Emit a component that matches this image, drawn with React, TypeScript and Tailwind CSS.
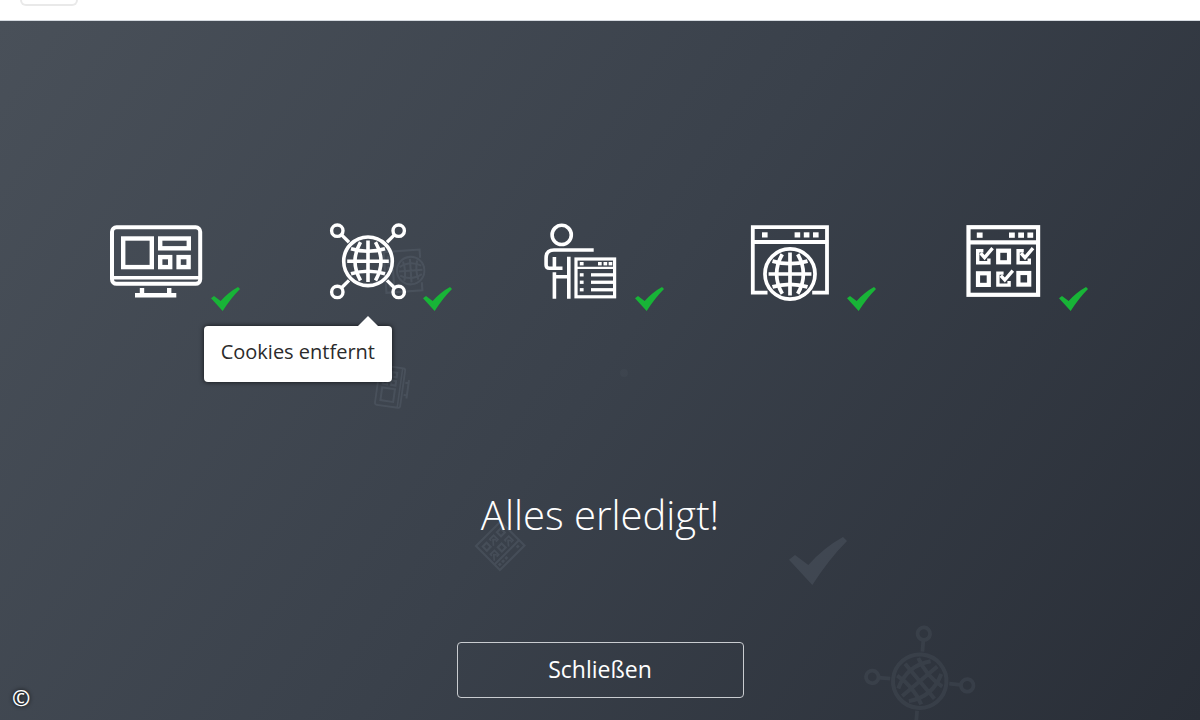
import type { ReactNode } from 'react';

interface Step {
  id: string;
  icon: ReactNode;
  tooltip?: string;
}

function GlobeShape() {
  return (
    <g fill="none" stroke="currentColor" strokeWidth="3.6">
      <circle r="24.3" />
      <path d="M0-20.8V20.8M-20.8 0H20.8" />
      <path d="M-7.5-19.2Q-18.5 0-7.5 19.2M7.5-19.2Q18.5 0 7.5 19.2" />
      <path d="M-17-12.5Q0-7.5 17-12.5M-17 12.5Q0 7.5 17 12.5" />
    </g>
  );
}

function MonitorIcon({ className }: { className: string }) {
  return (
    <svg className={className} viewBox="0 0 100 80" fill="none" stroke="currentColor" strokeWidth="4" aria-hidden="true">
      <rect x="6" y="6.3" width="88.2" height="56.5" rx="4.5" />
      <path d="M6 56.7H94" strokeWidth="3.4" />
      <rect x="17.2" y="17.5" width="28.6" height="28.6" strokeWidth="4.4" />
      <rect x="54.2" y="17.5" width="28.6" height="9.8" strokeWidth="4.4" />
      <rect x="54.2" y="36.1" width="10" height="10" strokeWidth="4.4" />
      <rect x="72.6" y="36.1" width="10" height="10" strokeWidth="4.4" />
      <path d="M29 74.2H70.3M36 67V74M63.2 67V74" strokeWidth="4.4" />
    </svg>
  );
}

function NetworkIcon({ className }: { className: string }) {
  return (
    <svg className={className} viewBox="0 0 100 80" fill="none" stroke="currentColor" strokeWidth="3.4" aria-hidden="true">
      <g transform="translate(50 40.3)">
        <GlobeShape />
      </g>
      <circle cx="19.3" cy="9.7" r="5.7" />
      <circle cx="80.7" cy="9.7" r="5.7" />
      <circle cx="19.3" cy="70.9" r="5.7" />
      <circle cx="80.7" cy="70.9" r="5.7" />
      <path d="M23.6 13.9L31 21.2M76.4 13.9L69 21.2M23.6 66.7L31 59.4M76.4 66.7L69 59.4" />
    </svg>
  );
}

function PersonIcon({ className }: { className: string }) {
  return (
    <svg className={className} viewBox="0 0 100 80" fill="none" stroke="currentColor" strokeWidth="3.6" aria-hidden="true">
      <circle cx="31.7" cy="13.9" r="9.6" />
      <path d="M63.7 29H24Q16.1 29 16.1 37V44Q16.1 47.3 19.5 47.3H32.5" />
      <path d="M24.4 36V47.3M24.4 51.2V77.8M38.8 35.8V77.8M24.4 55.7H38.8" />
      <rect x="46" y="38" width="38.6" height="37.8" strokeWidth="3.2" />
      <path d="M46 46.9H84.6" strokeWidth="2.4" />
      <g fill="currentColor" stroke="none">
        <rect x="49.8" y="41" width="3.8" height="3.4" />
        <rect x="68" y="41" width="3.7" height="3.4" />
        <rect x="73.5" y="41" width="3.7" height="3.4" />
        <rect x="78.6" y="41" width="3.7" height="3.4" />
        <rect x="49.8" y="52.2" width="3.8" height="3.3" />
        <rect x="49.8" y="59.6" width="3.8" height="3.3" />
        <rect x="49.8" y="67.1" width="3.8" height="3.3" />
        <rect x="61" y="52.2" width="22" height="3.3" />
        <rect x="61" y="59.6" width="22" height="3.3" />
        <rect x="61" y="67.1" width="22" height="3.3" />
      </g>
    </svg>
  );
}

function BrowserIcon({ className }: { className: string }) {
  return (
    <svg className={className} viewBox="0 0 100 80" fill="none" stroke="currentColor" strokeWidth="3.8" aria-hidden="true">
      <path d="M25.5 71.7H10.8V6.2H85V71.7H70.2" />
      <path d="M10.8 21H85" />
      <g fill="currentColor" stroke="none">
        <rect x="20" y="11.3" width="5.6" height="5.2" />
        <rect x="52.6" y="11.3" width="5.6" height="5.2" />
        <rect x="61.8" y="11.3" width="5.6" height="5.2" />
        <rect x="71" y="11.3" width="5.6" height="5.2" />
      </g>
      <g transform="translate(48 53) scale(1.03)">
        <GlobeShape />
      </g>
    </svg>
  );
}

function TickedBox({ x, y }: { x: number; y: number }) {
  return (
    <g transform={`translate(${x} ${y})`}>
      <path d="M7.4 1.7H1.7V13.7H12.9V9.6" strokeWidth="3.4" />
      <path d="M4.6 4.2L8.6 8.6L16.6-0.8" strokeWidth="3.4" />
    </g>
  );
}

function ChecklistIcon({ className }: { className: string }) {
  return (
    <svg className={className} viewBox="0 0 100 80" fill="none" stroke="currentColor" strokeWidth="4.2" aria-hidden="true">
      <rect x="14.5" y="6.2" width="69.6" height="67.6" />
      <path d="M14.5 21.4H84" />
      <g fill="currentColor" stroke="none">
        <rect x="22.8" y="11.5" width="5.8" height="5.3" />
        <rect x="55" y="11.5" width="5.8" height="5.3" />
        <rect x="64.2" y="11.5" width="5.8" height="5.3" />
        <rect x="73.4" y="11.5" width="5.8" height="5.3" />
      </g>
      <rect x="44.2" y="29.7" width="10.8" height="11.6" />
      <rect x="24" y="52.3" width="10.8" height="11.6" />
      <rect x="64.4" y="52" width="10.8" height="11.6" />
      <TickedBox x={22} y={28} />
      <TickedBox x={62.4} y={28} />
      <TickedBox x={42.2} y={50.4} />
    </svg>
  );
}

function CheckMark({ className }: { className: string }) {
  return (
    <svg className={className} viewBox="0 0 87 72" fill="currentColor" aria-hidden="true">
      <path d="M0 34L9 27L29 42Q52 16 81 0L87 6Q60 33 35 72Z" />
    </svg>
  );
}

function Tooltip({ text }: { text: string }) {
  return (
    <div
      role="tooltip"
      className="absolute top-[105px] right-[26px] rounded bg-white px-[17px] pt-3 pb-4 text-xl leading-7 whitespace-nowrap text-[#2b2b2b] shadow-[0_0_5px_rgba(0,0,0,0.75)]"
    >
      <svg className="absolute -top-[10px] right-[13px] h-[11px] w-[22px] text-white" viewBox="0 0 22 11" aria-hidden="true">
        <path d="M11 0L22 11H0Z" fill="currentColor" />
      </svg>
      {text}
    </div>
  );
}

const ICON_SIZE = 'h-20 w-[100px]';

const steps: Step[] = [
  { id: 'system', icon: <MonitorIcon className={ICON_SIZE} /> },
  { id: 'cookies', icon: <NetworkIcon className={ICON_SIZE} />, tooltip: 'Cookies entfernt' },
  { id: 'profile', icon: <PersonIcon className={ICON_SIZE} /> },
  { id: 'browser', icon: <BrowserIcon className={ICON_SIZE} /> },
  { id: 'settings', icon: <ChecklistIcon className={ICON_SIZE} /> },
];

// Faint icons floating behind the content
function BackgroundIcons() {
  return (
    <div className="pointer-events-none absolute inset-0 overflow-hidden text-[#8b97a6]">
      <BrowserIcon className="absolute top-[227px] left-[376px] h-[44px] w-[55px] rotate-[-94deg] opacity-15" />
      <MonitorIcon className="absolute top-[348px] left-[370px] h-9 w-[45px] -rotate-82 opacity-15" />
      <ChecklistIcon className="absolute top-[505px] left-[475px] h-[40px] w-[50px] rotate-[135deg] opacity-15" />
      <CheckMark className="absolute top-[516px] left-[789px] h-12 w-[58px] opacity-15" />
      <NetworkIcon className="absolute top-[616px] left-[865px] h-[88px] w-[110px] rotate-50 opacity-10" />
      <div className="absolute top-[348px] left-[620px] size-2 rounded-full bg-current opacity-5" />
    </div>
  );
}

export default function App() {
  return (
    <div className="flex min-h-screen flex-col bg-white font-['Open_Sans','Noto_Sans',sans-serif]">
      <header className="h-[21px] border-b border-[#d5dae0] px-5">
        <div className="h-[6px] w-[58px] rounded-b-md border-2 border-t-0 border-[#e9e9e9]" />
      </header>

      <main className="relative flex flex-1 flex-col items-center bg-linear-[125deg,#495059_0%,#3a414b_50%,#292e37_100%] pt-[200px] pb-[22px] text-white">
        <BackgroundIcons />

        <ul className="relative grid w-full grid-cols-5 pr-[90px] pl-[50px]">
          {steps.map((step) => (
            <li key={step.id} className="flex justify-center">
              <div className="relative">
                {step.icon}
                <CheckMark className="absolute -right-[34px] -bottom-[10px] h-6 w-[29px] text-[#18b437]" />
                {step.tooltip && <Tooltip text={step.tooltip} />}
              </div>
            </li>
          ))}
        </ul>

        <h1 className="relative mt-[184px] text-[40px] leading-[60px] font-light">Alles erledigt!</h1>

        <button
          type="button"
          className="relative mt-auto h-14 w-[287px] rounded border border-[#c9ccd0] pb-0.5 text-[23px] hover:bg-white/10"
        >
          Schließen
        </button>

        <span className="absolute bottom-[11px] left-3 text-[22px] leading-6 font-semibold text-white [text-shadow:0_0_4px_#000]">
          ©
        </span>
      </main>
    </div>
  );
}
